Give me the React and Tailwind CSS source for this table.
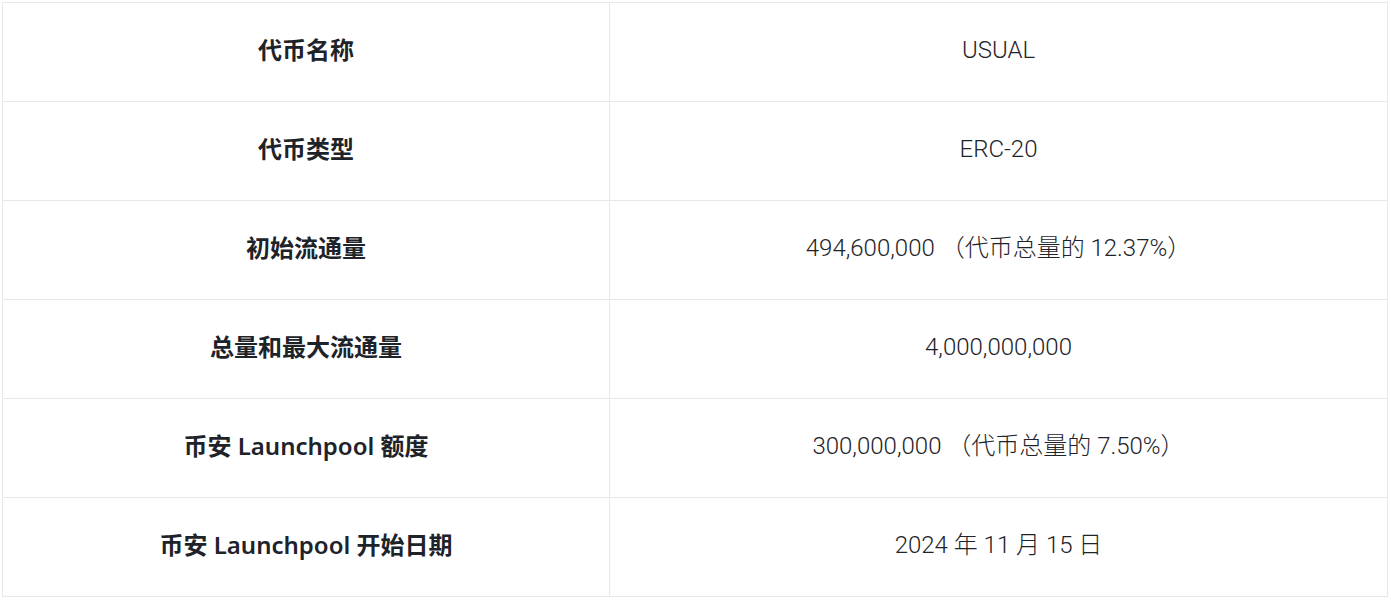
const rows = [
  { label: "代币名称", value: "USUAL" },
  { label: "代币类型", value: "ERC-20" },
  { label: "初始流通量", value: "494,600,000 （代币总量的 12.37%）" },
  { label: "总量和最大流通量", value: "4,000,000,000" },
  { label: "币安 Launchpool 额度", value: "300,000,000 （代币总量的 7.50%）" },
  { label: "币安 Launchpool 开始日期", value: "2024 年 11 月 15 日" },
];

const App = () => {
  return (
    <div className="min-h-screen bg-white pl-[2px] pt-[2px]">
      <div className="w-[1386px] border border-[#e6e8ea]">
        {rows.map((row, i) => (
          <div
            key={row.label}
            className={
              i > 0
                ? "grid grid-cols-[606px_1fr] h-[99px] border-t border-[#e6e8ea]"
                : "grid grid-cols-[606px_1fr] h-[98px]"
            }
          >
            <div className="flex items-center justify-center pb-[4px] text-[24px] font-semibold text-[#1e2329] font-['Noto_Sans','Noto_Sans_CJK_SC',sans-serif]">
              {row.label}
            </div>
            <div className="flex items-center justify-center pb-[4px] border-l border-[#e6e8ea] text-[24px] font-light text-[#1e2329] font-['Roboto','Noto_Sans_CJK_SC',sans-serif]">
              {row.value}
            </div>
          </div>
        ))}
      </div>
    </div>
  );
};

export default App;
